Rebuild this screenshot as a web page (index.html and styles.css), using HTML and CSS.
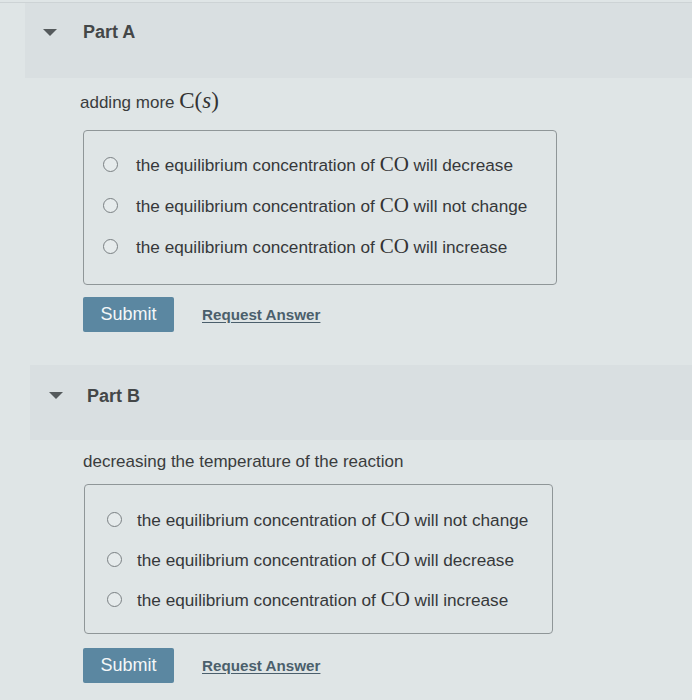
FILE: index.html
```html
<!DOCTYPE html>
<html>
<head>
<meta charset="utf-8">
<link rel="stylesheet" href="styles.css">
</head>
<body>
<div class="page">
  <section class="part part-a">
    <div class="part-header">
      <span class="caret"></span>
      <h2 class="part-title">Part A</h2>
    </div>
    <div class="part-body">
      <p class="question">adding more <span class="math">C(<i>s</i>)</span></p>
      <div class="options">
        <label class="option"><span class="radio"></span><span class="opt-text">the equilibrium concentration of <span class="math">CO</span> will decrease</span></label>
        <label class="option"><span class="radio"></span><span class="opt-text">the equilibrium concentration of <span class="math">CO</span> will not change</span></label>
        <label class="option"><span class="radio"></span><span class="opt-text">the equilibrium concentration of <span class="math">CO</span> will increase</span></label>
      </div>
      <div class="actions">
        <button class="submit">Submit</button>
        <a class="request" href="#">Request Answer</a>
      </div>
    </div>
  </section>

  <section class="part part-b">
    <div class="part-header">
      <span class="caret"></span>
      <h2 class="part-title">Part B</h2>
    </div>
    <div class="part-body">
      <p class="question">decreasing the temperature of the reaction</p>
      <div class="options">
        <label class="option"><span class="radio"></span><span class="opt-text">the equilibrium concentration of <span class="math">CO</span> will not change</span></label>
        <label class="option"><span class="radio"></span><span class="opt-text">the equilibrium concentration of <span class="math">CO</span> will decrease</span></label>
        <label class="option"><span class="radio"></span><span class="opt-text">the equilibrium concentration of <span class="math">CO</span> will increase</span></label>
      </div>
      <div class="actions">
        <button class="submit">Submit</button>
        <a class="request" href="#">Request Answer</a>
      </div>
    </div>
  </section>
</div>
</body>
</html>
```

FILE: styles.css
```css
html, body {
  margin: 0;
  padding: 0;
}

body {
  background: #dfe5e6;
  font-family: "Liberation Sans", Arial, sans-serif;
  color: #3a3c3d;
  width: 692px;
  height: 700px;
  overflow: hidden;
}

.page {
  padding-top: 2px;
}

.part-header {
  display: flex;
  align-items: center;
  height: 76px;
  box-sizing: border-box;
  background: #d9dfe1;
  margin-left: 25px;
}

.part-a .part-header {
  border-top: 1px solid #cdd3d5;
  margin-left: 0;
  padding-left: 25px;
  background: linear-gradient(to right, #dfe5e6 0, #dfe5e6 25px, #d9dfe1 25px);
}

.caret {
  width: 0;
  height: 0;
  border-left: 7px solid transparent;
  border-right: 7px solid transparent;
  border-top: 7px solid #555a5c;
  margin-left: 18px;
  margin-top: -16px;
}

.part-title {
  margin: -17px 0 0 26px;
  font-size: 18px;
  font-weight: bold;
  line-height: 24px;
  color: #444748;
}

.part-body {
  padding-left: 80px;
}

.question {
  margin: 11px 0 0 0;
  font-size: 17px;
  line-height: 24px;
  color: #3a3c3d;
}

.math {
  font-family: "Liberation Serif", "DejaVu Serif", serif;
  font-size: 21px;
  color: #333;
}

.question .math {
  font-size: 23px;
}

.math i {
  font-style: italic;
}

.options {
  margin-top: 15px;
  margin-left: 3px;
  width: 474px;
  box-sizing: border-box;
  border: 1px solid #8f9698;
  border-radius: 4px;
  padding: 21px 0 26px 19px;
  display: flex;
  flex-direction: column;
  gap: 17px;
}

.option {
  display: flex;
  align-items: center;
  height: 24px;
  font-size: 17.2px;
  color: #36383a;
}

.radio {
  width: 13px;
  height: 13px;
  border: 1.5px solid #7a8083;
  border-radius: 50%;
  background: #e6ebec;
  margin-right: 18px;
  flex: none;
}

.actions {
  display: flex;
  align-items: center;
  margin-top: 12px;
  margin-left: 3px;
  gap: 28px;
}

.submit {
  width: 91px;
  height: 35px;
  border: none;
  border-radius: 2px;
  background: #5b87a1;
  color: #f4f7f8;
  font-family: "Liberation Sans", Arial, sans-serif;
  font-size: 18px;
  padding: 0;
}

.request {
  font-size: 15.2px;
  font-weight: bold;
  color: #4b5f6c;
  text-decoration: underline;
  text-underline-offset: 2px;
}

.part-b {
  margin-top: 33px;
}

.part-b .part-header {
  margin-left: 30px;
  height: 75px;
}

.part-b .caret {
  margin-left: 19px;
  margin-top: -14px;
}

.part-b .part-title {
  margin-left: 24px;
  margin-top: -14px;
}

.part-b .part-body {
  padding-left: 83px;
}

.part-b .question {
  margin-top: 10px;
}

.part-b .options {
  margin-top: 10px;
  margin-left: 1px;
  width: 469px;
  padding: 22px 0 22px 22px;
  gap: 16px;
}

.part-b .radio {
  margin-right: 15px;
}

.part-b .actions {
  margin-top: 14px;
  margin-left: 0;
}
```
